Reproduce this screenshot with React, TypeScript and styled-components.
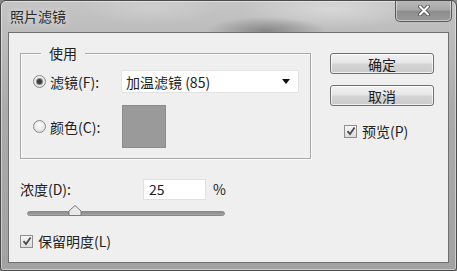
import React from "react";
import styled, { createGlobalStyle } from "styled-components";

const Global = createGlobalStyle`
  html, body { margin: 0; padding: 0; background: #8a8a8a; }
  body { font-family: "Noto Sans CJK SC", "Noto Sans", sans-serif; }
  * { box-sizing: border-box; }
`;

const Frame = styled.div`
  width: 457px;
  height: 271px;
  display: flex;
  flex-direction: column;
  border: 1px solid #4a4a4a;
  border-radius: 6px 6px 3px 3px;
  background:
    radial-gradient(ellipse 60px 14px at 265px 30px, rgba(90,90,90,0.55), rgba(90,90,90,0) 100%),
    radial-gradient(ellipse 90px 20px at 330px 8px, rgba(230,230,230,0.6), rgba(230,230,230,0) 100%),
    radial-gradient(ellipse 70px 18px at 150px 6px, rgba(220,220,220,0.45), rgba(220,220,220,0) 100%),
    linear-gradient(180deg, #c4c4c4 0%, #ababab 40%, #a2a2a2 100%);
  box-shadow: inset 0 0 0 1px rgba(255,255,255,0.45);
  overflow: hidden;
`;

const TitleBar = styled.div`
  height: 31px;
  flex: none;
  display: flex;
  align-items: flex-start;
  justify-content: space-between;
  padding-left: 9px;
`;

const Title = styled.div`
  margin-top: 6px;
  font-size: 14px;
  line-height: 18px;
  color: #2a2a2a;
  text-shadow: 0 0 6px rgba(255,255,255,0.8);
`;

const CloseButton = styled.div`
  width: 57px;
  height: 22px;
  margin-right: 4px;
  margin-top: -1px;
  border: 1px solid #5a5a5a;
  border-top: none;
  border-radius: 0 0 5px 5px;
  background: linear-gradient(180deg, #b9b9b9 0%, #a9a9a9 45%, #8d8d8d 55%, #9a9a9a 100%);
  box-shadow: inset 0 0 0 1px rgba(255,255,255,0.45);
  display: flex;
  align-items: center;
  justify-content: center;
`;

const Client = styled.div`
  flex: 1;
  margin: 0 7px 7px 7px;
  background: #efefef;
  border: 1px solid #6f6f6f;
  display: flex;
  padding: 20px 0 0 11px;
  color: #222;
  font-size: 14px;
`;

const LeftCol = styled.div`
  width: 291px;
  display: flex;
  flex-direction: column;
`;

const GroupBox = styled.div`
  position: relative;
  height: 106px;
  border: 1px solid #a8a8a8;
  box-shadow: inset 1px 1px 0 #fbfbfb, 1px 1px 0 #fbfbfb;
  padding: 16px 11px 0 12px;
  display: flex;
  flex-direction: column;
  gap: 12px;
`;

const Legend = styled.span`
  position: absolute;
  top: -10px;
  left: 20px;
  padding: 0 8px;
  background: #efefef;
  line-height: 18px;
`;

const OptionRow = styled.div`
  display: grid;
  grid-template-columns: 88px 1fr;
  align-items: center;
`;

const RadioLabel = styled.label`
  display: flex;
  align-items: center;
  gap: 4px;
  line-height: 18px;
`;

const RadioDot = styled.span<{ $on?: boolean }>`
  width: 13px;
  height: 13px;
  border-radius: 50%;
  border: 1px solid #8b8b8b;
  background: radial-gradient(circle at 50% 40%, #ffffff 0%, #e2e2e2 70%, #cfcfcf 100%);
  display: flex;
  align-items: center;
  justify-content: center;
  &::after {
    content: "";
    width: 5px;
    height: 5px;
    border-radius: 50%;
    background: ${(p) => (p.$on ? "#3d3d3d" : "transparent")};
    box-shadow: ${(p) => (p.$on ? "0 0 0 1px #8a8a8a" : "none")};
  }
`;

const Select = styled.div`
  height: 23px;
  width: 178px;
  background: #fff;
  border: 1px solid #e2e2e2;
  border-radius: 2px;
  display: flex;
  align-items: center;
  justify-content: space-between;
  padding: 0 6px 0 4px;
  line-height: 18px;
`;

const Arrow = styled.span`
  width: 0;
  height: 0;
  border-left: 4px solid transparent;
  border-right: 4px solid transparent;
  border-top: 5px solid #111;
  margin-right: 2px;
`;

const Swatch = styled.div`
  width: 44px;
  height: 43px;
  margin-left: 1px;
  background: #9a9a9a;
  border: 1px solid #8c8c8c;
`;

const DensityRow = styled.div`
  display: flex;
  align-items: center;
  margin-top: 19px;
  height: 22px;
`;

const DensityLabel = styled.span`
  width: 123px;
  line-height: 18px;
`;

const NumberBox = styled.div`
  width: 63px;
  height: 21px;
  background: #fff;
  border: 1px solid #e0e0e0;
  padding-left: 5px;
  line-height: 19px;
`;

const Percent = styled.span`
  margin-left: 7px;
  line-height: 18px;
`;

const SliderWrap = styled.div`
  position: relative;
  margin: 7px 0 0 7px;
  width: 198px;
  height: 12px;
  display: flex;
  align-items: center;
`;

const Track = styled.div`
  width: 100%;
  height: 5px;
  border-radius: 3px;
  background: linear-gradient(180deg, #8a8a8a 0%, #a5a5a5 100%);
  border: 1px solid #8a8a8a;
`;

const Thumb = styled.svg`
  position: absolute;
  top: -2px;
`;

const CheckRow = styled.label<{ $top?: number; $left?: number }>`
  display: flex;
  align-items: center;
  gap: 5px;
  margin-top: ${(p) => p.$top ?? 0}px;
  margin-left: ${(p) => p.$left ?? 0}px;
  line-height: 18px;
`;

const CheckBox = styled.span`
  width: 13px;
  height: 13px;
  border: 1px solid #8e8e8e;
  background: linear-gradient(180deg, #f6f6f6, #dcdcdc);
  display: flex;
  align-items: center;
  justify-content: center;
`;

const RightCol = styled.div`
  margin-left: 19px;
  padding-top: 0;
  display: flex;
  flex-direction: column;
  align-items: flex-start;
`;

const Button = styled.div<{ $gap?: number }>`
  width: 104px;
  height: 21px;
  margin-top: ${(p) => p.$gap ?? 0}px;
  border: 1px solid #707070;
  border-radius: 3px;
  background: linear-gradient(180deg, #f2f2f2 0%, #e6e6e6 48%, #d4d4d4 52%, #cbcbcb 100%);
  box-shadow: inset 0 0 0 1px rgba(255,255,255,0.7);
  display: flex;
  align-items: center;
  justify-content: center;
  line-height: 18px;
  color: #1e1e1e;
`;

const Check = () => (
  <svg width="10" height="10" viewBox="0 0 10 10">
    <path d="M1.5 5.2 L4 8 L8.6 1.5" fill="none" stroke="#4a4a4a" strokeWidth="1.8" />
  </svg>
);

export default function App() {
  return (
    <>
      <Global />
      <Frame>
        <TitleBar>
          <Title>照片滤镜</Title>
          <CloseButton>
            <svg width="12" height="11" viewBox="0 0 12 11">
              <path d="M2 1.5 L10 9.5 M10 1.5 L2 9.5" stroke="#3c3c3c" strokeWidth="3.6" strokeLinecap="round" />
              <path d="M2 1.5 L10 9.5 M10 1.5 L2 9.5" stroke="#ffffff" strokeWidth="2.2" strokeLinecap="round" />
            </svg>
          </CloseButton>
        </TitleBar>
        <Client>
          <LeftCol>
            <GroupBox>
              <Legend>使用</Legend>
              <OptionRow>
                <RadioLabel>
                  <RadioDot $on />
                  滤镜(F):
                </RadioLabel>
                <Select>
                  <span>加温滤镜 (85)</span>
                  <Arrow />
                </Select>
              </OptionRow>
              <OptionRow>
                <RadioLabel>
                  <RadioDot />
                  颜色(C):
                </RadioLabel>
                <Swatch />
              </OptionRow>
            </GroupBox>
            <DensityRow>
              <DensityLabel>浓度(D):</DensityLabel>
              <NumberBox>25</NumberBox>
              <Percent>%</Percent>
            </DensityRow>
            <SliderWrap>
              <Track />
              <Thumb width="14" height="11" viewBox="0 0 14 11" style={{ left: 41 }}>
                <path d="M7 0.5 L13 6 L13 10.5 L1 10.5 L1 6 Z" fill="#e8e8e8" stroke="#7a7a7a" strokeWidth="1" />
              </Thumb>
            </SliderWrap>
            <CheckRow $top={13}>
              <CheckBox>
                <Check />
              </CheckBox>
              保留明度(L)
            </CheckRow>
          </LeftCol>
          <RightCol>
            <Button>确定</Button>
            <Button $gap={11}>取消</Button>
            <CheckRow $top={16} $left={14}>
              <CheckBox>
                <Check />
              </CheckBox>
              预览(P)
            </CheckRow>
          </RightCol>
        </Client>
      </Frame>
    </>
  );
}
